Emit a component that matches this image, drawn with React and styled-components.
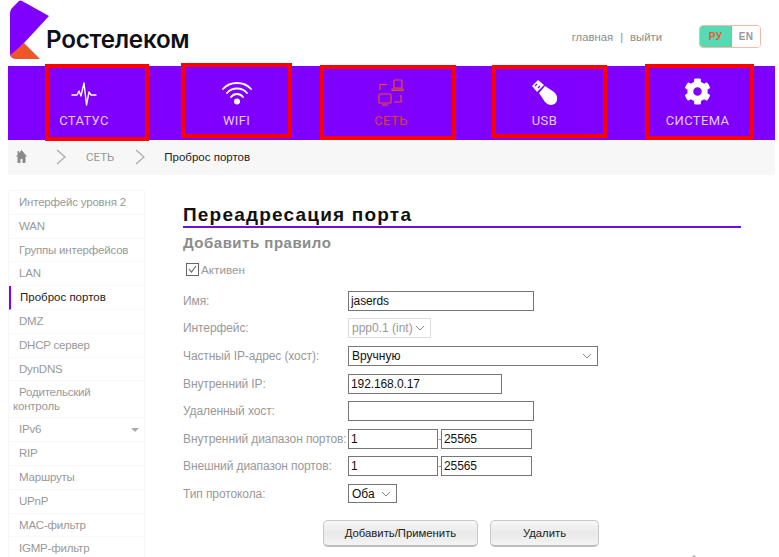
import React from 'react';
import styled, { createGlobalStyle } from 'styled-components';
import { FaCog } from 'react-icons/fa';

const GlobalStyle = createGlobalStyle`
  html, body {
    margin: 0;
    height: 557px;
    overflow: hidden;
    background: #fff;
    font-family: "Liberation Sans", Arial, sans-serif;
  }
`;

const chevron = `url("data:image/svg+xml,%3Csvg xmlns='http://www.w3.org/2000/svg' width='10' height='6'%3E%3Cpath d='M1 1l4 4 4-4' fill='none' stroke='%23888' stroke-width='1'/%3E%3C/svg%3E")`;

const Page = styled.div`
  width: 779px;
  height: 557px;
  padding: 0 4px 0 8px;
  box-sizing: border-box;
  overflow: hidden;
  position: relative;
`;

const Header = styled.header`
  height: 66px;
  display: flex;
  align-items: flex-start;
  margin-left: -8px;
`;

const LogoMark = styled.svg`
  width: 60px;
  height: 62px;
  flex: none;
`;

const LogoText = styled.div`
  font-family: Inter, Roboto, sans-serif;
  font-weight: 600;
  font-size: 24.2px;
  letter-spacing: -0.25px;
  color: #101018;
  margin: 27px 0 0 -14px;
  line-height: 26px;
`;

const TopLinks = styled.div`
  margin: 30px 0 0 auto;
  font-size: 11.3px;
  color: #8c8c8c;
  line-height: 14px;
  display: flex;
  gap: 7px;
`;

const Lang = styled.div`
  display: flex;
  margin: 25px 14px 0 37px;
  width: 62px;
  height: 23px;
  border: 1px solid #f7b9a4;
  border-radius: 4px;
  overflow: hidden;
  box-sizing: border-box;
`;

const LangItem = styled.div`
  flex: ${p => (p.$active ? '0 0 31px' : '1')};
  background: ${p => (p.$active ? '#57d9b4' : '#fff')};
  color: ${p => (p.$active ? '#e0622e' : '#999')};
  border-right: ${p => (p.$active ? '1px solid #e09a70' : 'none')};
  font-size: 10px;
  font-weight: bold;
  letter-spacing: 0.4px;
  text-align: center;
  line-height: 21px;
`;

const Nav = styled.nav`
  height: 74px;
  background: #7f00ff;
  display: flex;
  align-items: flex-start;
`;

const NavItem = styled.a`
  box-sizing: border-box;
  flex: none;
  width: ${p => p.$w}px;
  height: ${p => p.$h}px;
  margin-left: ${p => p.$left}px;
  margin-top: ${p => p.$top}px;
  padding: 0 ${p => p.$pr || 0}px 0 ${p => p.$pl || 0}px;
  border: 4px solid #ff0000;
  display: flex;
  flex-direction: column;
  align-items: center;
  color: ${p => (p.$active ? '#d8402a' : '#e3ccff')};
  font-family: Roboto, sans-serif;
  font-size: 13px;
  letter-spacing: 0.35px;
  line-height: 15px;
  svg { display: block; flex: none; }
`;

const NavIcon = styled.div`
  height: ${p => p.$h}px;
  margin-top: ${p => p.$top}px;
  display: flex;
  align-items: flex-start;
  justify-content: center;
`;

const Crumbs = styled.div`
  height: 35px;
  padding-bottom: 2px;
  box-sizing: border-box;
  background: #f7f7f7;
  display: flex;
  align-items: center;
  font-size: 11.5px;
  color: #999;
`;

const CrumbIcon = styled.svg`
  flex: none;
  margin-left: ${p => p.$left}px;
`;

const Crumb = styled.span`
  margin-left: ${p => p.$left}px;
  color: ${p => (p.$current ? '#222' : '#999')};
  font-family: ${p => (p.$current ? '"Liberation Sans"' : 'Roboto')}, sans-serif;
`;

const Body = styled.div`
  display: flex;
  margin-top: 15px;
`;

const Side = styled.ul`
  list-style: none;
  margin: 0;
  padding: 0;
  flex: 0 0 137px;
  border: 1px solid #f8f8f8;
  border-bottom: none;
  box-sizing: border-box;
`;

const SideItem = styled.li`
  position: relative;
  box-sizing: border-box;
  min-height: 23.8px;
  padding: 4px 3px 4px ${p => (p.$active ? 9 : 10)}px;
  border-bottom: 1px solid #f8f8f8;
  border-left: ${p => (p.$active ? '2px solid #7f00ff' : 'none')};
  font-size: 11.5px;
  letter-spacing: ${p => (p.$active ? 0 : -0.2)}px;
  line-height: 14px;
  color: ${p => (p.$active ? '#222' : '#999')};
`;

const WrapLine = styled.span`
  display: block;
  margin-left: -6px;
`;

const Caret = styled.i`
  position: absolute;
  right: 5px;
  top: 10px;
  border: 4px solid transparent;
  border-top-color: #aaa;
  border-bottom: none;
`;

const Main = styled.main`
  flex: none;
  width: 558px;
  margin-left: 38px;
  padding-top: 14px;
`;

const Title = styled.h1`
  margin: 0;
  height: 22px;
  font-size: 19px;
  line-height: 22px;
  letter-spacing: 1.2px;
  font-weight: bold;
  color: #111;
  border-bottom: 2px solid #6f10d8;
`;

const Subtitle = styled.h2`
  margin: 6px 0 0;
  font-size: 15px;
  line-height: 18px;
  letter-spacing: 0.5px;
  font-weight: bold;
  color: #8c8c8c;
`;

const Active = styled.label`
  display: flex;
  align-items: center;
  gap: 2px;
  margin: 10px 0 0 3px;
  height: 14px;
  font-size: 11.7px;
  color: #999;
`;

const CheckBox = styled.span`
  box-sizing: border-box;
  width: 13px;
  height: 13px;
  border: 1px solid #666;
  background: #fff;
  display: flex;
  align-items: center;
  justify-content: center;
`;

const Rows = styled.div`
  margin-top: 11px;
`;

const Row = styled.div`
  display: flex;
  align-items: center;
  height: 27.6px;
  font-size: 12px;
  letter-spacing: -0.1px;
  color: #999;
`;

const RowLabel = styled.div`
  flex: 0 0 165px;
  white-space: nowrap;
`;

const Field = styled.input`
  box-sizing: border-box;
  width: ${p => p.$w}px;
  height: 20px;
  margin: 0;
  padding: 0 2px;
  border: 1px solid #767676;
  border-radius: 0;
  background: #fff;
  font-family: "Liberation Sans", Arial, sans-serif;
  font-size: 12px;
  letter-spacing: -0.1px;
  color: #111;
  outline: none;
`;

const Sep = styled.span`
  width: 3px;
  text-align: center;
  color: #999;
`;

const Select = styled.select`
  box-sizing: border-box;
  appearance: none;
  width: ${p => p.$w}px;
  height: ${p => p.$h || 20}px;
  margin: 0;
  padding: 0 0 0 3px;
  border: 1px solid ${p => (p.disabled ? '#ddd' : '#767676')};
  border-radius: 0;
  background: #fff ${chevron} no-repeat right 5px center;
  font-family: "Liberation Sans", Arial, sans-serif;
  font-size: 12px;
  color: ${p => (p.disabled ? '#999' : '#111')};
  opacity: 1;
`;

const Buttons = styled.div`
  display: flex;
  gap: 12px;
  margin: 12px 0 0 140px;
`;

const Button = styled.button`
  box-sizing: border-box;
  width: ${p => p.$w}px;
  height: 27px;
  border: 1px solid #c8c8c8;
  border-bottom: 2px solid #bdbdbd;
  border-radius: 5px;
  background: linear-gradient(#f8f8f8, #e9e9e9 50%, #f4f4f4);
  font-family: "Liberation Sans", Arial, sans-serif;
  font-size: 11.3px;
  color: #222;
`;

const Tick = styled.i`
  position: absolute;
  left: 692px;
  bottom: 0;
  border: 2px solid transparent;
  border-bottom-color: #aaa;
  border-top: none;
`;

const menu = ['Интерфейс уровня 2', 'WAN', 'Группы интерфейсов', 'LAN', 'Проброс портов', 'DMZ', 'DHCP сервер', 'DynDNS'];
const menu2 = ['RIP', 'Маршруты', 'UPnP', 'MAC-фильтр', 'IGMP-фильтр'];

function Logo() {
  return (
    <LogoMark viewBox="0 0 60 62">
      <path d="M10 14 Q10 9 14 6 L19 1 Q20 0 22 1 L49 16 L24 43 L11 57 Q10 56 10 52 Z" fill="#7f00ff" />
      <path d="M24 43 L40 59 L16 59 Q11 59 10.5 55 Z" fill="#f0552a" />
    </LogoMark>
  );
}

export default function App() {
  return (
    <Page>
      <GlobalStyle />
      <Header>
        <Logo />
        <LogoText>Ростелеком</LogoText>
        <TopLinks><span>главная</span><span>|</span><span>выйти</span></TopLinks>
        <Lang><LangItem $active>РУ</LangItem><LangItem>EN</LangItem></Lang>
      </Header>
      <Nav>
        <NavItem $w={104} $h={77} $left={37} $top={-2} $pr={26}>
          <NavIcon $top={12} $h={33}>
            <svg width="26" height="26" viewBox="0 0 26 26" fill="none" stroke="#fff" strokeWidth="1.4" strokeLinejoin="round" strokeLinecap="round">
              <path d="M1 15h5l2-4 2 5 3-13 2.500 22 2.500-13 2 3h5" />
            </svg>
          </NavIcon>
          СТАТУС
        </NavItem>
        <NavItem $w={111} $h={75} $left={32} $top={-3}>
          <NavIcon $top={13} $h={33}>
            <svg width="30" height="26" viewBox="0 0 30 26" fill="none" stroke="#fff" strokeWidth="1.8" strokeLinecap="round">
              <path d="M1 9C8 1 22 1 29 9" />
              <path d="M5 13C10 7 20 7 25 13" />
              <path d="M9 17C12 13 18 13 21 17" />
              <circle cx="15" cy="21.500" r="3" fill="#fff" stroke="none" />
            </svg>
          </NavIcon>
          WIFI
        </NavItem>
        <NavItem $w={136} $h={75} $left={28} $top={-1} $pl={6} $active>
          <NavIcon $top={10} $h={34}>
            <svg width="26" height="28" viewBox="0 0 26 28" fill="none" stroke="#e8502a" strokeWidth="1.200">
              <rect x="16" y="1" width="8" height="8" rx="1" />
              <path d="M14 11.500h11v-1.500h-11z" />
              <rect x="1" y="15" width="12" height="9" rx="1" />
              <path d="M4 26h6" />
              <path d="M2 11V5.500h7" />
              <path d="M16 23h7v-7" />
            </svg>
          </NavIcon>
          СЕТЬ
        </NavItem>
        <NavItem $w={115} $h={73} $left={36} $top={-1} $pr={10}>
          <NavIcon $top={10} $h={34}>
            <svg width="28" height="28" viewBox="0 0 28 28">
              <path d="M1 7L7 1L13 6L6 13Z" fill="#fff" />
              <path d="M8 14L14 7L23 13C28 17 27 26 20 26C18 26 16 25 14 23Z" fill="#fff" />
              <path d="M4 7l2-2M7 9l2-2" stroke="#7f00ff" strokeWidth="1.200" />
            </svg>
          </NavIcon>
          USB
        </NavItem>
        <NavItem $w={109} $h={76} $left={38} $top={-2} $pr={4}>
          <NavIcon $top={10} $h={35}>
            <FaCog size={27} color="#fff" />
          </NavIcon>
          СИСТЕМА
        </NavItem>
      </Nav>
      <Crumbs>
        <CrumbIcon $left={8} width="11" height="13" viewBox="0 0 11 13">
          <path d="M5.500 0L11 6.500H9.500V13H6.500V9H4.500V13H1.500V6.500H0L1.500 4.700V1H3V3Z" fill="#8a8a8a" />
        </CrumbIcon>
        <CrumbIcon $left={29} width="10" height="16" viewBox="0 0 10 16" fill="none" stroke="#aaa" strokeWidth="1.200">
          <path d="M1 1l8 7-8 7" />
        </CrumbIcon>
        <Crumb $left={20}>СЕТЬ</Crumb>
        <CrumbIcon $left={21} width="10" height="16" viewBox="0 0 10 16" fill="none" stroke="#aaa" strokeWidth="1.200">
          <path d="M1 1l8 7-8 7" />
        </CrumbIcon>
        <Crumb $left={19} $current>Проброс портов</Crumb>
      </Crumbs>
      <Body>
        <Side>
          {menu.map(m => <SideItem key={m} $active={m === 'Проброс портов'}>{m}</SideItem>)}
          <SideItem>Родительский<WrapLine>контроль</WrapLine></SideItem>
          <SideItem>IPv6<Caret /></SideItem>
          {menu2.map(m => <SideItem key={m}>{m}</SideItem>)}
        </Side>
        <Main>
          <Title>Переадресация порта</Title>
          <Subtitle>Добавить правило</Subtitle>
          <Active>
            <CheckBox>
              <svg width="9" height="8" viewBox="0 0 9 8" fill="none" stroke="#666" strokeWidth="1.100">
                <path d="M1 4l2.500 3L8 1" />
              </svg>
            </CheckBox>
            Активен
          </Active>
          <Rows>
            <Row><RowLabel>Имя:</RowLabel><Field $w={186} defaultValue="jaserds" /></Row>
            <Row>
              <RowLabel>Интерфейс:</RowLabel>
              <Select $w={83} disabled><option>ppp0.1 (int)</option></Select>
            </Row>
            <Row>
              <RowLabel>Частный IP-адрес (хост):</RowLabel>
              <Select $w={250}><option>Вручную</option></Select>
            </Row>
            <Row><RowLabel>Внутренний IP:</RowLabel><Field $w={154} defaultValue="192.168.0.17" /></Row>
            <Row><RowLabel>Удаленный хост:</RowLabel><Field $w={186} /></Row>
            <Row>
              <RowLabel>Внутренний диапазон портов:</RowLabel>
              <Field $w={90} defaultValue="1" /><Sep>-</Sep><Field $w={91} defaultValue="25565" />
            </Row>
            <Row>
              <RowLabel>Внешний диапазон портов:</RowLabel>
              <Field $w={90} defaultValue="1" /><Sep>-</Sep><Field $w={91} defaultValue="25565" />
            </Row>
            <Row>
              <RowLabel>Тип протокола:</RowLabel>
              <Select $w={49} $h={19}><option>Оба</option></Select>
            </Row>
          </Rows>
          <Buttons>
            <Button $w={155}>Добавить/Применить</Button>
            <Button $w={109}>Удалить</Button>
          </Buttons>
        </Main>
      </Body>
      <Tick />
    </Page>
  );
}
